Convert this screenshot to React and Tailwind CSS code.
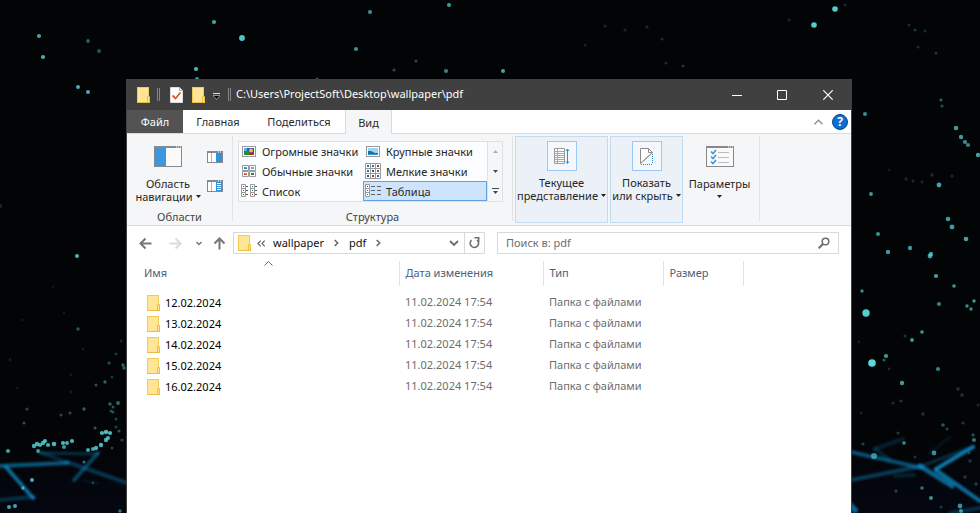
import React from "react";

const files = ["12.02.2024", "13.02.2024", "14.02.2024", "15.02.2024", "16.02.2024"];

// x, y, radius, opacity
const stars = [
  [39, 36, 2.1, 0.75], [43, 57, 2.1, 0.8], [88, 41, 1.9, 0.45], [99, 51, 1.9, 0.4],
  [214, 22, 2.1, 0.75], [242, 38, 2.9, 0.9], [196, 69, 2.1, 0.85], [197, 79, 2, 0.7],
  [370, 12, 2.1, 0.65], [449, 5, 2.1, 0.7], [356, 49, 2.1, 0.65], [394, 70, 1.6, 0.35],
  [416, 61, 1.6, 0.35], [446, 71, 2.1, 0.6], [317, 79, 1.5, 0.4], [503, 71, 2, 0.75],
  [585, 45, 1.6, 0.15], [605, 26, 1.6, 0.18], [625, 30, 1.6, 0.18], [647, 27, 1.6, 0.2],
  [662, 39, 1.6, 0.2], [666, 63, 1.6, 0.2], [683, 66, 1.6, 0.25], [789, 20, 1.6, 0.16],
  [814, 25, 2.8, 0.95], [835, 9, 2.8, 0.95], [845, 5, 1.5, 0.2], [909, 25, 1.6, 0.2],
  [915, 30, 1.6, 0.25], [925, 31, 1.6, 0.2], [918, 47, 1.6, 0.2], [936, 53, 1.6, 0.25],
  [78, 87, 2, 0.8], [88, 92, 2, 0.8], [77, 256, 2, 0.85], [78, 329, 1.7, 0.4],
  [0, 206, 2, 0.2], [83, 349, 1.2, 0.15], [64, 313, 1.2, 0.12], [53, 287, 1.3, 0.1],
  [22, 320, 1.3, 0.12], [10, 360, 1.4, 0.15], [17, 388, 1.3, 0.12], [27, 409, 1.5, 0.35],
  [24, 423, 1.5, 0.35], [71, 375, 1.4, 0.12], [71, 392, 1.4, 0.15], [61, 415, 1.5, 0.35],
  [70, 413, 1.6, 0.35], [84, 409, 1.7, 0.45], [96, 385, 1.6, 0.35], [105, 382, 1.7, 0.45],
  [109, 363, 1.8, 0.3], [116, 354, 1.5, 0.25], [121, 341, 1.5, 0.2], [123, 365, 1.7, 0.45],
  [124, 368, 1.7, 0.45], [112, 377, 1.5, 0.25], [110, 404, 1.7, 0.45], [113, 407, 1.5, 0.4],
  [118, 403, 1.9, 0.5], [111, 411, 1.5, 0.35], [113, 412, 1.5, 0.35], [116, 419, 1.5, 0.3],
  [95, 428, 1.6, 0.4], [119, 431, 1.5, 0.4], [122, 440, 1.6, 0.3], [116, 427, 1.5, 0.3],
  [8, 451, 2, 0.75], [34, 446, 2.2, 0.8], [37, 444, 2.2, 0.8], [40, 445, 2.1, 0.8],
  [43, 443, 2.2, 0.8], [45, 441, 2.1, 0.85], [48, 445, 2.1, 0.8], [54, 444, 2.3, 0.85],
  [38, 451, 1.9, 0.7], [63, 443, 2, 0.85], [67, 443, 2, 0.8], [72, 441, 2.1, 0.85],
  [64, 447, 2, 0.7], [88, 450, 2, 0.75], [93, 449, 2, 0.75], [96, 448, 2.2, 0.8],
  [101, 445, 2.2, 0.85], [106, 440, 2.2, 0.8], [108, 438, 2, 0.8], [102, 433, 2.1, 0.85],
  [106, 432, 2.2, 0.85], [110, 433, 2.1, 0.85], [32, 480, 2, 0.8], [23, 488, 1.7, 0.7],
  [9, 507, 2, 0.75], [15, 506, 2, 0.75], [84, 462, 1.6, 0.5], [120, 511, 1.8, 0.5],
  [112, 448, 1.5, 0.3], [93, 483, 1.4, 0.25],
  [865, 114, 2, 0.65], [941, 100, 1.6, 0.45], [942, 106, 1.6, 0.35], [956, 128, 2.3, 0.7],
  [961, 137, 2.2, 0.7], [965, 142, 2.1, 0.65], [968, 145, 2.1, 0.6], [978, 155, 2.2, 0.75],
  [871, 194, 1.9, 0.7], [939, 185, 2.4, 0.75], [932, 175, 1.8, 0.2], [952, 176, 1.5, 0.2],
  [906, 179, 1.5, 0.2], [913, 181, 1.5, 0.2], [922, 182, 1.5, 0.2], [889, 170, 1.5, 0.12],
  [948, 219, 2.3, 0.7], [952, 227, 2.4, 0.7], [878, 234, 2.1, 0.65], [966, 239, 2.3, 0.75],
  [888, 252, 2.2, 0.7], [910, 248, 2.2, 0.7], [930, 256, 2.4, 0.75], [931, 254, 2.2, 0.7],
  [936, 276, 2.1, 0.75], [954, 286, 1.8, 0.7], [862, 291, 1.7, 0.65], [939, 304, 2.1, 0.6],
  [974, 301, 1.7, 0.7], [967, 306, 1.7, 0.65], [971, 309, 1.7, 0.65], [866, 313, 3.7, 0.95],
  [922, 332, 1.8, 0.7], [912, 340, 1.9, 0.7], [905, 336, 1.6, 0.25], [859, 342, 1.4, 0.15],
  [886, 356, 2.1, 0.7], [884, 360, 1.6, 0.4], [872, 363, 3.8, 1], [938, 369, 2.1, 0.6],
  [902, 383, 2.2, 0.7], [889, 369, 1.4, 0.2], [958, 389, 1.7, 0.25], [962, 395, 1.7, 0.25],
  [893, 403, 1.6, 0.2], [901, 401, 1.6, 0.25], [923, 414, 1.7, 0.25], [861, 413, 1.5, 0.15],
  [943, 425, 1.8, 0.4], [947, 429, 1.6, 0.3], [963, 423, 1.6, 0.25], [904, 443, 1.8, 0.65],
  [898, 433, 1.6, 0.25], [934, 453, 2.4, 0.65], [974, 440, 2.1, 0.5], [973, 435, 1.7, 0.35],
  [863, 444, 1.6, 0.3], [874, 456, 3, 0.6], [915, 457, 1.5, 0.25], [922, 488, 1.8, 0.5],
  [931, 498, 2, 0.65], [896, 491, 1.8, 0.25], [960, 506, 2.4, 0.65], [961, 511, 2, 0.65],
  [941, 507, 1.5, 0.25], [965, 477, 1.7, 0.25], [970, 461, 1.7, 0.25], [976, 484, 1.8, 0.25],
  [969, 453, 1.5, 0.25], [978, 405, 1.5, 0.2],
];

// x1, y1, x2, y2, width, opacity
const beams = [
  [0, 466, 67, 463, 4, 0.6], [6, 467, 33, 498, 4, 0.75], [0, 500, 34, 497, 4, 0.3],
  [67, 462, 130, 484, 4, 0.35], [40, 452, 68, 463, 4, 0.25], [40, 453, 98, 454, 3, 0.3],
  [98, 453, 74, 480, 4, 0.45], [84, 481, 98, 483, 2, 0.15],
  [851, 452, 922, 468, 4, 0.55], [851, 480, 922, 466, 4, 0.4], [920, 466, 952, 486, 5, 0.7],
  [936, 469, 973, 447, 4, 0.85], [936, 470, 980, 501, 4, 0.75], [922, 466, 969, 448, 3, 0.3],
  [875, 449, 903, 439, 4, 0.2], [875, 449, 889, 459, 4, 0.2], [895, 476, 914, 475, 4, 0.2],
  [930, 453, 950, 437, 3, 0.12], [950, 513, 980, 508, 4, 0.3], [850, 505, 855, 510, 6, 0.7],
];

function Backdrop() {
  return (
    <svg className="absolute inset-0 h-full w-full" viewBox="0 0 980 513" preserveAspectRatio="xMidYMax slice" aria-hidden="true">
      <defs>
        <filter id="soft" x="-5%" y="-5%" width="110%" height="110%" colorInterpolationFilters="sRGB">
          <feGaussianBlur stdDeviation="0.8" />
        </filter>
        <filter id="dot" x="-5%" y="-5%" width="110%" height="110%" colorInterpolationFilters="sRGB">
          <feGaussianBlur stdDeviation="0.5" />
        </filter>
        <linearGradient id="floor" x1="0" y1="0" x2="0" y2="1">
          <stop offset="0.84" stopColor="#030406" />
          <stop offset="1" stopColor="#040710" />
        </linearGradient>
      </defs>
      <rect width="980" height="513" fill="url(#floor)" />
      <g filter="url(#soft)" stroke="#0e8cc6" strokeLinecap="round">
        {beams.map(([x1, y1, x2, y2, w, o], i) => (
          <line key={i} x1={x1} y1={y1} x2={x2} y2={y2} strokeWidth={w} opacity={o} />
        ))}
      </g>
      <g filter="url(#dot)" fill="#58d8dc">
        {stars.map(([x, y, r, o], i) => (
          <circle key={i} cx={x} cy={y} r={r} opacity={o} />
        ))}
      </g>
    </svg>
  );
}

function Folder() {
  return (
    <svg className="shrink-0" width="13" height="16" viewBox="0 0 13 16" aria-hidden="true">
      <rect x="0.5" y="0.5" width="11" height="15" fill="#ffe595" stroke="#f0cb58" />
      <path d="M10.500 15.500v-6h2v6z" fill="#ffe595" stroke="#ecc03f" />
      <path d="M0 15.500h13" stroke="#ecc03f" />
    </svg>
  );
}

function Caret() {
  return (
    <svg className="shrink-0" width="5" height="3" viewBox="0 0 5 3" aria-hidden="true">
      <path d="M0 0h5L2.500 3z" fill="#222" />
    </svg>
  );
}

function RibbonLabel({ top, bottom }) {
  return (
    <span className="flex flex-col items-center whitespace-nowrap">
      <span className="block h-[13px]">{top}</span>
      <span className="flex h-[13px] items-center gap-[3px]">
        {bottom && <span className="block h-[13px]">{bottom}</span>}
        <Caret />
      </span>
    </span>
  );
}

function PaneIcon() {
  return (
    <svg width="28" height="21" viewBox="0 0 28 21" aria-hidden="true">
      <rect x="0.5" y="0.5" width="27" height="20" fill="#fafafa" stroke="#85898d" />
      <path d="M0 1h28" stroke="#85898d" strokeWidth="2" />
      <path d="M22 1h1M24 1h1M26 1h1" stroke="#fff" />
      <rect x="1" y="2" width="11" height="18" fill="#3d97dd" />
    </svg>
  );
}

function PreviewIcon({ lines }) {
  return (
    <svg width="16" height="12" viewBox="0 0 16 12" aria-hidden="true">
      <rect x="0.5" y="0.5" width="15" height="11" fill="#fff" stroke="#85898d" />
      <path d="M0 1h16" stroke="#85898d" strokeWidth="2" />
      <path d="M11 1h1M13 1h1" stroke="#fff" />
      <path d="M4.500 2v9" stroke="#b5b8ba" />
      <rect x="9" y="2" width="6" height="9" fill="#2f93e0" />
      {lines && <path d="M10 3.500h4M10 5.500h4M10 7.500h4M10 9.500h4" stroke="#fff" />}
    </svg>
  );
}

function ViewIcon({ kind }) {
  const box = { fill: "#fff", stroke: "#9a9a9a" };
  return (
    <svg className="shrink-0" width="16" height="16" viewBox="0 0 16 16" aria-hidden="true">
      {kind === "huge" && (
        <g>
          <rect x="1.500" y="2.500" width="13" height="10" {...box} />
          <rect x="3" y="4" width="10" height="7" fill="#2659b8" />
          <path d="M3 8l3-2 3 2v3H3z" fill="#2f8a35" />
          <rect x="3" y="4" width="3" height="3" fill="#5bb2ea" />
          <circle cx="10" cy="6.500" r="2" fill="#f0c419" />
          <path d="M8 11V8.500h4V11z" fill="#b32b1e" />
        </g>
      )}
      {kind === "large" && (
        <g>
          <rect x="1.500" y="2.500" width="13" height="10" {...box} />
          <rect x="3" y="4" width="10" height="7" fill="#9fd3f3" />
          <path d="M3 7l3 0 4 2 3 0v2H3z" fill="#2b6c8c" />
          <path d="M3 10h10v1H3z" fill="#2a9fd8" />
        </g>
      )}
      {kind === "medium" && (
        <g>
          <path d="M1.500 2.500h6v5h-6zM8.500 2.500h6v5h-6zM1.500 8.500h6v5h-6zM8.500 8.500h6v5h-6z" {...box} />
          <path d="M3 4h3v2H3z" fill="#2c7fc4" />
          <path d="M4 4h2v1H4z" fill="#6cc04a" />
          <path d="M10 4h3v2h-3z" fill="#66abd8" />
          <path d="M3 10h3v2H3z" fill="#d24726" />
          <path d="M4 10h2v1H4z" fill="#f2b21b" />
          <path d="M10 10h3v2h-3z" fill="#2f7a3c" />
          <path d="M11 10h2v1h-2z" fill="#2e62c4" />
        </g>
      )}
      {kind === "small" && (
        <g>
          <path d="M0.500 0.500h15v15H0.500zM5.500 0v16M10.500 0v16M0 5.500h16M0 10.500h16" {...box} />
          <path d="M2 2h2v2H2zM12 7h2v2h-2z" fill="#337d55" />
          <path d="M7 2h2v2H7zM2 7h2v2H2zM12 12h2v2h-2z" fill="#3468ad" />
          <path d="M12 2h2v2h-2zM7 12h2v2H7z" fill="#b53a29" />
          <path d="M7 7h2v2H7zM2 12h2v2H2z" fill="#3c566e" />
        </g>
      )}
      {kind === "list" && (
        <g>
          <path d="M0.500 1.500h4v12h-4zM0.500 5.500h4M0.500 9.500h4M9.500 1.500h4v12h-4zM9.500 5.500h4M9.500 9.500h4" {...box} />
          <path d="M2 3h1v1H2zM11 7h1v1h-1z" fill="#2f7a3c" />
          <path d="M2 7h1v1H2zM11 3h1v1h-1z" fill="#3468ad" />
          <path d="M2 11h1v1H2zM11 11h1v1h-1z" fill="#c03a24" />
          <path d="M5 3.500h2M5 7.500h2M5 11.500h2M14 3.500h2M14 7.500h2M14 11.500h2" stroke="#555" />
        </g>
      )}
      {kind === "table" && (
        <g>
          <path d="M0.500 1.500h4v12h-4zM0.500 5.500h4M0.500 9.500h4" {...box} />
          <path d="M2 3h1v1H2z" fill="#2f7a3c" />
          <path d="M2 7h1v1H2z" fill="#3468ad" />
          <path d="M2 11h1v1H2z" fill="#c03a24" />
          <path d="M6 3.500h4M6 7.500h4M6 11.500h4M12 3.500h4M12 7.500h4M12 11.500h4" stroke="#5d6670" />
        </g>
      )}
    </svg>
  );
}

const views = [
  ["huge", "Огромные значки"], ["large", "Крупные значки"],
  ["medium", "Обычные значки"], ["small", "Мелкие значки"],
  ["list", "Список"], ["table", "Таблица"],
];

function Grip() {
  return (
    <svg width="3" height="13" viewBox="0 0 3 13" aria-hidden="true">
      <path d="M0.500 0v13M2.500 0v13" stroke="#858585" />
    </svg>
  );
}

function TitleBar() {
  return (
    <header className="flex h-[31px] items-center bg-[#404040] pl-[10px] text-white">
      <Folder />
      <span className="ml-[7px]"><Grip /></span>
      <button aria-label="Свойства" className="ml-[10px]">
        <svg width="13" height="16" viewBox="0 0 13 16" aria-hidden="true">
          <path d="M0.500 0.500h9l3 3v12h-12z" fill="#fff" stroke="#ddd" />
          <path d="M9.500 0.500v3h3" fill="none" stroke="#aaa" />
          <path d="M2.500 8.500l3 3 5-6" fill="none" stroke="#e2562b" strokeWidth="1.800" />
        </svg>
      </button>
      <button aria-label="Новая папка" className="ml-[9px]"><Folder /></button>
      <button aria-label="Настройка панели" className="ml-2 pt-1">
        <svg width="7" height="7" viewBox="0 0 7 7" aria-hidden="true">
          <path d="M0 0.500h7" stroke="#ddd" />
          <path d="M0 2.500h7L3.500 6.500z" fill="#000" stroke="#ddd" strokeWidth="0.600" />
        </svg>
      </button>
      <span className="ml-[8px]"><Grip /></span>
      <h1 className="ml-[5px] min-w-0 flex-1 truncate">C:\Users\ProjectSoft\Desktop\wallpaper\pdf</h1>
      <button aria-label="Свернуть" className="flex h-full w-[45px] items-center justify-center">
        <svg width="10" height="10" viewBox="0 0 10 10"><path d="M0 5.500h10" stroke="#fff" /></svg>
      </button>
      <button aria-label="Развернуть" className="flex h-full w-[46px] items-center justify-center">
        <svg width="10" height="10" viewBox="0 0 10 10"><path d="M0.500 0.500h9v9h-9z" fill="none" stroke="#fff" /></svg>
      </button>
      <button aria-label="Закрыть" className="flex h-full w-[46px] items-center justify-center">
        <svg width="10" height="10" viewBox="0 0 10 10"><path d="M0.300 0.300l9.400 9.400M9.700 0.300l-9.400 9.400" stroke="#fff" strokeWidth="1.200" /></svg>
      </button>
    </header>
  );
}

function Tabs() {
  return (
    <nav className="flex h-6 border-b border-[#dadbdc] leading-[23px] text-[#2b2b2b]">
      <button className="h-[23px] w-14 bg-[#535353] text-white">Файл</button>
      <button className="w-[70px]">Главная</button>
      <button className="w-[92px]">Поделиться</button>
      <button className="-mb-px w-[47px] border-x border-[#dadbdc] bg-[#f5f6f7]">Вид</button>
      <div className="ml-auto flex items-center gap-[9px] pr-[3px]">
        <button aria-label="Свернуть ленту">
          <svg width="9" height="6" viewBox="0 0 9 6"><path d="M0.500 5.200l4-4 4 4" fill="none" stroke="#8d8d8d" strokeWidth="1.300" /></svg>
        </button>
        <button aria-label="Справка" className="h-4 w-4 rounded-full border border-[#07478c] bg-[#0a6fd0] text-center text-[12px] leading-[14px] font-bold text-white">?</button>
      </div>
    </nav>
  );
}

function Separator() {
  return <div className="mt-[2px] mb-1 w-px bg-[#e1e2e3]" />;
}

function Ribbon() {
  return (
    <div className="flex h-[92px] border-b border-[#dadbdc] bg-[#f5f6f7] leading-[13px] text-[#262626]">
      <section className="flex w-[105px] flex-col">
        <div className="flex h-[74px]">
          <button className="flex w-20 flex-col items-center pt-3 pl-[2px]">
            <PaneIcon />
            <span className="mt-[10px]"><RibbonLabel top="Область" bottom="навигации" /></span>
          </button>
          <div className="flex flex-1 flex-col items-start gap-[17px] pt-[17px]">
            <button aria-label="Область просмотра"><PreviewIcon /></button>
            <button aria-label="Область сведений"><PreviewIcon lines /></button>
          </div>
        </div>
        <h2 className="text-center leading-[17px] text-[#444]">Области</h2>
      </section>
      <Separator />
      <section className="flex w-[279px] flex-col">
        <div className="flex h-[74px] pt-[7px] pl-[5px]">
          <div className="grid h-[61px] w-[249px] grid-cols-2 grid-rows-3 border border-r-0 border-[#dfe0e1] bg-[#fcfdfe]">
            {views.map(([kind, label]) => (
              <button
                key={kind}
                aria-pressed={kind === "table"}
                className={
                  kind === "table"
                    ? "flex items-center gap-[5px] border border-[#62a2e4] bg-[#cde4fc] pl-px whitespace-nowrap"
                    : "flex items-center gap-[5px] pl-[2px] whitespace-nowrap"
                }
              >
                <ViewIcon kind={kind} />
                {label}
              </button>
            ))}
          </div>
          <div className="flex h-[61px] w-4 flex-col border border-[#dfe0e1]">
            <button aria-label="Вверх" className="flex flex-1 items-center justify-center">
              <svg width="5" height="3" viewBox="0 0 5 3"><path d="M0 3h5L2.500 0z" fill="#a9b0b8" /></svg>
            </button>
            <button aria-label="Вниз" className="flex flex-1 items-center justify-center">
              <svg width="5" height="3" viewBox="0 0 5 3"><path d="M0 0h5L2.500 3z" fill="#3c4a5e" /></svg>
            </button>
            <button aria-label="Дополнительно" className="flex flex-1 items-center justify-center">
              <svg width="7" height="6" viewBox="0 0 7 6"><path d="M0 0h7v1H0zM1 3h5L3.500 6z" fill="#3c4a5e" /></svg>
            </button>
          </div>
        </div>
        <h2 className="text-center leading-[17px] text-[#444]">Структура</h2>
      </section>
      <Separator />
      <section className="flex gap-[2px] pt-[2px] pr-[5px] pl-[2px]">
        <button className="flex h-[87px] w-[93px] flex-col items-center border border-[#c0dcf3] bg-[#ebf1f6] pt-1">
          <span className="flex h-[30px] w-[30px] items-center justify-center border border-[#99caf7] bg-[#f4f8fc]">
            <svg width="16" height="17" viewBox="0 0 16 17" aria-hidden="true">
              <path d="M0.500 0.500h10v15h-10z" fill="#fff" stroke="#9b9b9b" />
              <path d="M1 3.500h9M1 5.500h9M1 7.500h9M1 9.500h9M1 11.500h9M1 13.500h9M3.500 1v14" stroke="#a8a8a8" />
              <path d="M13.500 1v14M12 3l1.500-2L15 3M12 13.500l1.500 2 1.500-2" fill="none" stroke="#2f8fd6" />
            </svg>
          </span>
          <span className="mt-[5px]"><RibbonLabel top="Текущее" bottom="представление" /></span>
        </button>
        <button className="flex h-[87px] w-[73px] flex-col items-center border border-[#c0dcf3] bg-[#ebf1f6] pt-1">
          <span className="flex h-[30px] w-[30px] items-center justify-center border border-[#99caf7] bg-[#f4f8fc]">
            <svg width="13" height="17" viewBox="0 0 13 17" aria-hidden="true">
              <path d="M0.500 15.500v-15h8l4 4z" fill="#fff" stroke="#8c8c8c" />
              <path d="M0.500 15.500L12 5" stroke="#8c8c8c" />
              <path d="M8.500 0.500v4h4" fill="none" stroke="#8c8c8c" />
              <path d="M12.500 6v10M1 16.500h12" stroke="#1f86d8" strokeDasharray="1 1" />
            </svg>
          </span>
          <span className="mt-[5px]"><RibbonLabel top="Показать" bottom="или скрыть" /></span>
        </button>
        <button className="flex h-[87px] w-[69px] flex-col items-center pt-[10px]">
          <svg width="28" height="21" viewBox="0 0 28 21" aria-hidden="true">
            <rect x="0.5" y="0.5" width="27" height="20" fill="#fafafa" stroke="#85898d" />
            <path d="M0 1h28" stroke="#85898d" strokeWidth="2" />
            <path d="M22 1h1M24 1h1M26 1h1" stroke="#fff" />
            <path d="M12 6.500h11M12 11.500h11M12 16.500h11" stroke="#bbb" />
            <path d="M5 5.500l2 2 3-3.500M5 10.500l2 2 3-3.500M5 15.500l2 2 3-3.500" fill="none" stroke="#3d97dd" strokeWidth="1.600" />
          </svg>
          <span className="mt-[10px]"><RibbonLabel top="Параметры" /></span>
        </button>
      </section>
      <Separator />
    </div>
  );
}

function Arrow({ d, color }) {
  return (
    <svg width="13" height="13" viewBox="0 0 13 13" aria-hidden="true">
      <path d={d} fill="none" stroke={color} strokeWidth="2" />
    </svg>
  );
}

function Chevron() {
  return (
    <svg width="5" height="8" viewBox="0 0 5 8" aria-hidden="true">
      <path d="M0.700 1L3.700 4l-3 3" fill="none" stroke="#666" strokeWidth="1.500" />
    </svg>
  );
}

function AddressRow() {
  return (
    <div className="flex h-[34px] items-center px-3">
      <button aria-label="Назад"><Arrow d="M12.500 6.500H1.500M6.500 1.500l-5 5 5 5" color="#777" /></button>
      <button aria-label="Вперёд" className="ml-[17px]"><Arrow d="M0.500 6.500h11M6.500 1.500l5 5-5 5" color="#dcdcdc" /></button>
      <button aria-label="Недавние" className="ml-[14px]">
        <svg width="6" height="5" viewBox="0 0 6 5"><path d="M0.500 1L3 3.500 5.500 1" fill="none" stroke="#777" strokeWidth="1.500" /></svg>
      </button>
      <button aria-label="Вверх" className="ml-[11px]"><Arrow d="M6.500 12.500v-11M1.500 6.500l5-5 5 5" color="#777" /></button>
      <div className="ml-[7px] flex h-[22px] w-[252px] items-center border border-[#d9d9d9] pl-1 text-[#111]">
        <Folder />
        <button aria-label="Предыдущие папки" className="ml-[6px]">
          <svg width="9" height="7" viewBox="0 0 9 7"><path d="M3.700 0.700L1 3.500l2.700 2.800M7.700 0.700L5 3.500l2.700 2.800" fill="none" stroke="#666" strokeWidth="1.200" /></svg>
        </button>
        <button className="ml-[7px]">wallpaper</button>
        <span className="ml-[10px]"><Chevron /></span>
        <button className="ml-[10px]">pdf</button>
        <span className="ml-[10px]"><Chevron /></span>
        <button aria-label="Показать список" className="mr-[5px] ml-auto">
          <svg width="10" height="7" viewBox="0 0 10 7"><path d="M1 1l4 4 4-4" fill="none" stroke="#6d6d6d" strokeWidth="1.800" /></svg>
        </button>
        <button aria-label="Обновить" className="flex h-full w-5 items-center justify-center border-l border-[#d9d9d9]">
          <svg width="11" height="12" viewBox="0 0 11 12">
            <path d="M2.500 3.200A4.200 4.200 0 1 0 8 3" fill="none" stroke="#6d6d6d" strokeWidth="1.600" />
            <path d="M5.500 0.800H9.700V5" fill="none" stroke="#6d6d6d" strokeWidth="1.500" />
          </svg>
        </button>
      </div>
      <label className="ml-3 flex h-[22px] min-w-0 flex-1 items-center border border-[#d9d9d9] px-2">
        <input type="search" aria-label="Поиск" placeholder="Поиск в: pdf" className="min-w-0 flex-1 outline-none placeholder:text-[#6d6d6d]" />
        <svg width="12" height="12" viewBox="0 0 12 12" aria-hidden="true">
          <circle cx="7.500" cy="4.500" r="3.300" fill="none" stroke="#6d6d6d" strokeWidth="1.500" />
          <path d="M5 7L0.700 11.300" stroke="#6d6d6d" strokeWidth="2" />
        </svg>
      </label>
    </div>
  );
}

function FileList() {
  return (
    <table className="mt-px w-full table-fixed text-left text-[#6d6d6d]">
      <colgroup>
        <col className="w-[272px]" />
        <col className="w-[144px]" />
        <col className="w-[120px]" />
        <col className="w-[80px]" />
        <col />
      </colgroup>
      <thead>
        <tr className="h-[25px] text-[#4c607a]">
          <th className="relative border-r border-[#e3e3e3] pl-[17px] font-normal">
            Имя
            <svg className="absolute top-0 left-[137px]" width="9" height="5" viewBox="0 0 9 5" aria-hidden="true">
              <path d="M0.500 4.500l4-4 4 4" fill="none" stroke="#666" />
            </svg>
          </th>
          <th className="border-r border-[#e3e3e3] pl-[6px] font-normal">Дата изменения</th>
          <th className="border-r border-[#e3e3e3] pl-[6px] font-normal">Тип</th>
          <th className="border-r border-[#e3e3e3] pl-[6px] font-normal">Размер</th>
          <th />
        </tr>
      </thead>
      <tbody className="before:block before:h-[6px]">
        {files.map((name) => (
          <tr key={name} className="h-[21px]">
            <td className="pl-5 text-black">
              <span className="flex items-center gap-[5px] leading-[21px]"><Folder />{name}</span>
            </td>
            <td className="pl-[6px]">11.02.2024 17:54</td>
            <td className="pl-[6px]">Папка с файлами</td>
            <td />
            <td />
          </tr>
        ))}
      </tbody>
    </table>
  );
}

export default function App() {
  return (
    <div className="relative flex min-h-screen overflow-hidden bg-[#030406] pt-[79px] pr-32 pl-[126px] font-['Noto_Sans','Open_Sans',sans-serif] text-[11px]">
      <Backdrop />
      <main className="relative flex min-w-0 flex-1 flex-col border-x border-[#404040] bg-white">
        <TitleBar />
        <Tabs />
        <Ribbon />
        <AddressRow />
        <FileList />
      </main>
    </div>
  );
}
